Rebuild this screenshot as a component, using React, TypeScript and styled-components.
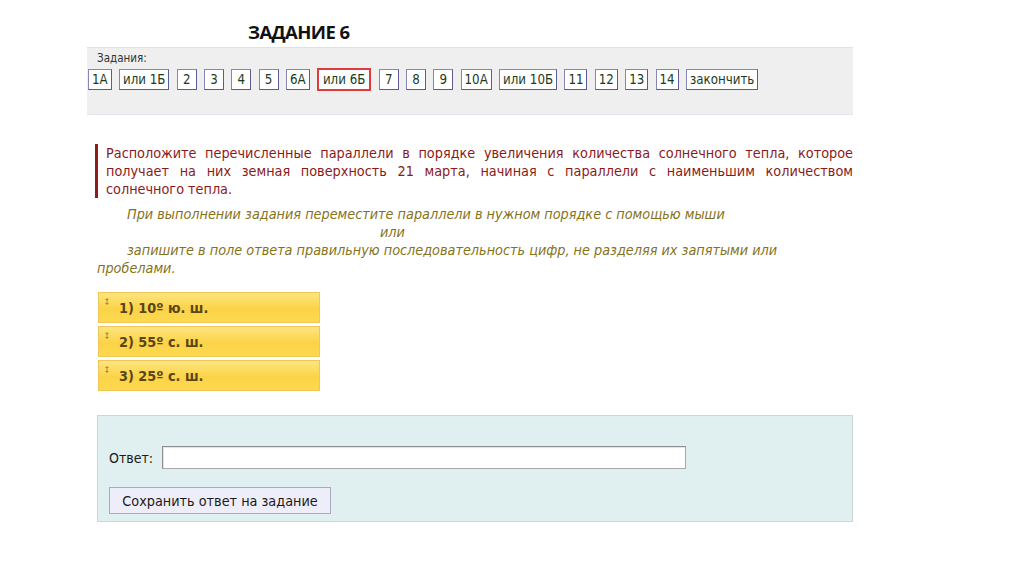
import React from 'react'
import styled, { createGlobalStyle } from 'styled-components'

const GlobalStyle = createGlobalStyle`
  html, body {
    margin: 0;
    padding: 0;
    background: #ffffff;
  }
  body {
    font-family: 'DejaVu Sans Condensed', 'DejaVu Sans', sans-serif;
    font-stretch: condensed;
  }
`

const Page = styled.div`
  width: 766px;
  padding: 20px 0 0 87px;
`

const Title = styled.h1`
  margin: 0 0 4px 161px;
  font-family: 'Open Sans', sans-serif;
  font-stretch: normal;
  font-weight: 700;
  font-size: 18.5px;
  line-height: 23px;
  color: #111111;
  letter-spacing: -0.6px;
`

const TasksPanel = styled.div`
  height: 68px;
  background: #efefef;
  border-top: 1px solid #dfe2ec;
  border-bottom: 1px solid #e4e6ee;
  box-sizing: border-box;
  padding: 3px 0 0 1px;
`

const TasksLabel = styled.div`
  margin-left: 9px;
  font-size: 11.5px;
  line-height: 14px;
  color: #333333;
`

const TasksRow = styled.div`
  display: flex;
  gap: 7.3px;
  margin-top: 4px;
`

const TaskButton = styled.button<{ $current?: boolean }>`
  height: ${(p) => (p.$current ? '23px' : '21px')};
  margin-top: ${(p) => (p.$current ? '-1px' : '0')};
  padding: 0 ${(p) => (p.$current ? '4px' : '3px')};
  min-width: 20px;
  background: #ffffff;
  border: ${(p) => (p.$current ? '2px solid #e23b3b' : '1px solid #8585b8')};
  border-right-color: ${(p) => (p.$current ? '#e23b3b' : '#5c5c92')};
  border-bottom-color: ${(p) => (p.$current ? '#e23b3b' : '#5c5c92')};
  font-family: inherit;
  font-stretch: condensed;
  font-size: 13.2px;
  color: #1d3a1d;
  cursor: pointer;
`

const Question = styled.div`
  margin: 29px 0 0 8px;
  padding-left: 8px;
  border-left: 3px solid #8f1b1b;
  font-size: 14.3px;
  line-height: 18px;
  color: #8b1a1a;
  text-align: justify;
`

const Hint = styled.div`
  margin: 7px 0 0 10px;
  font-size: 14.3px;
  line-height: 18px;
  font-style: italic;
  color: #857318;
`

const HintLine = styled.div<{ $indent: number }>`
  padding-left: ${(p) => p.$indent}px;
`

const HintPara = styled.div`
  text-indent: 30px;
`

const Items = styled.div`
  display: flex;
  flex-direction: column;
  gap: 3px;
  width: 222px;
  margin: 15px 0 0 11px;
`

const Item = styled.div`
  display: flex;
  align-items: center;
  height: 31px;
  box-sizing: border-box;
  padding-left: 6px;
  background: linear-gradient(#fde57e, #fbd347 55%, #fdd94f);
  border: 1px solid #f0c65a;
  font-size: 14.3px;
  font-weight: 700;
  color: #5a4514;
  cursor: move;
`

const Grip = styled.svg`
  align-self: flex-start;
  margin: 5px 10px 0 0;
  flex: none;
`

const AnswerPanel = styled.div`
  margin: 24px 0 0 10px;
  height: 107px;
  box-sizing: border-box;
  padding: 30px 0 0 11px;
  background: #e0efef;
  border: 1px solid #cdd6d6;
`

const AnswerRow = styled.div`
  display: flex;
  align-items: center;
  gap: 9px;
  font-size: 14px;
  color: #1a1a1a;
`

const AnswerInput = styled.input`
  width: 524px;
  height: 23px;
  box-sizing: border-box;
  border: 1px solid #a8a8a8;
  border-top-color: #8e8e8e;
  border-left-color: #8e8e8e;
  background: #ffffff;
  box-shadow: inset 1px 1px 1px rgba(0, 0, 0, 0.12);
`

const SaveButton = styled.button`
  margin-top: 18px;
  width: 222px;
  height: 27px;
  background: #eeeefb;
  border: 1px solid #a9a9c0;
  font-family: inherit;
  font-stretch: condensed;
  font-size: 14.3px;
  color: #1a1a1a;
  cursor: pointer;
`

const tasks = [
  '1А', 'или 1Б', '2', '3', '4', '5', '6А', 'или 6Б', '7', '8', '9',
  '10А', 'или 10Б', '11', '12', '13', '14', 'закончить',
]

const options = ['1) 10º ю. ш.', '2) 55º с. ш.', '3) 25º с. ш.']

const App = () => {
  return (
    <>
      <GlobalStyle />
      <Page>
        <Title>ЗАДАНИЕ 6</Title>
        <TasksPanel>
          <TasksLabel>Задания:</TasksLabel>
          <TasksRow>
            {tasks.map((t) => (
              <TaskButton key={t} type="button" $current={t === 'или 6Б'}>
                {t}
              </TaskButton>
            ))}
          </TasksRow>
        </TasksPanel>

        <Question>
          Расположите перечисленные параллели в порядке увеличения количества
          солнечного тепла, которое получает на них земная поверхность 21
          марта, начиная с параллели с наименьшим количеством солнечного тепла.
        </Question>

        <Hint>
          <HintLine $indent={30}>
            При выполнении задания переместите параллели в нужном порядке с
            помощью мыши
          </HintLine>
          <HintLine $indent={283}>или</HintLine>
          <HintPara>
            запишите в поле ответа правильную последовательность цифр, не
            разделяя их запятыми или пробелами.
          </HintPara>
        </Hint>

        <Items>
          {options.map((o) => (
            <Item key={o}>
              <Grip width="4" height="7" viewBox="0 0 4 7">
                <path d="M2 0 L4 2 H0 Z M2 7 L4 5 H0 Z M1.5 2 H2.5 V5 H1.5 Z" fill="#b08a2a" />
              </Grip>
              {o}
            </Item>
          ))}
        </Items>

        <AnswerPanel>
          <AnswerRow>
            Ответ:
            <AnswerInput type="text" />
          </AnswerRow>
          <SaveButton type="button">Сохранить ответ на задание</SaveButton>
        </AnswerPanel>
      </Page>
    </>
  )
}

export default App
